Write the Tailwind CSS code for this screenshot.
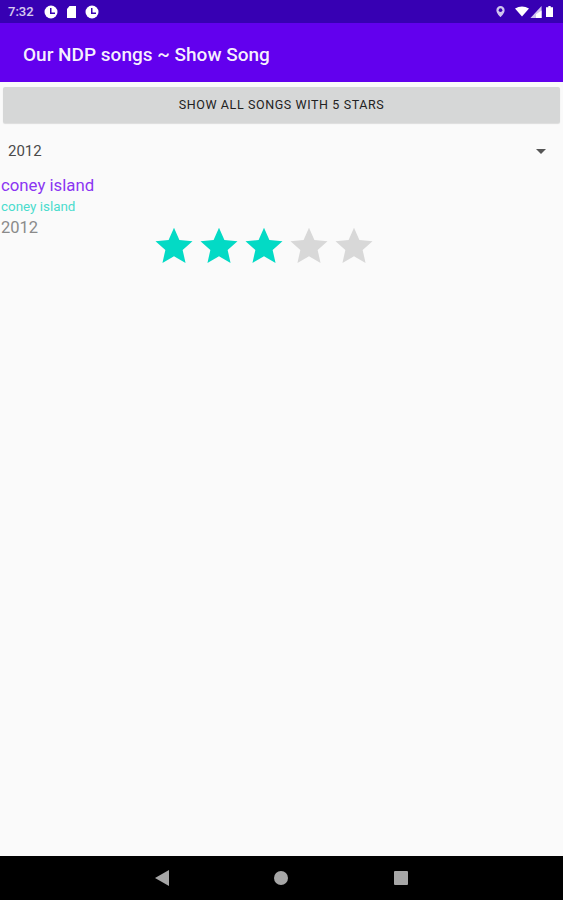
<!DOCTYPE html>
<html lang="en">
<head>
  <meta charset="UTF-8" />
  <meta name="viewport" content="width=device-width, initial-scale=1" />
  <title>Show Song</title>
  <script src="https://cdn.jsdelivr.net/npm/@tailwindcss/browser@4"></script>
</head>
<body class="bg-[#fafafa] font-['Roboto',sans-serif]">
  <div class="flex h-[900px] w-[563px] flex-col overflow-hidden">

    <!-- Status bar -->
    <div class="flex h-[23px] items-center justify-between bg-[#3700b3] pl-[8px] pr-[10px] text-white">
      <div class="flex items-center">
        <span class="w-[27px] text-[13px] font-medium leading-none text-white/80">7:32</span>
        <svg class="ml-[9px] h-[14px] w-[14px]" viewBox="0 0 14 14"><circle cx="7" cy="7" r="6.500" fill="#fff"/><path d="M6 3h1.500v4.500H11V9H6z" fill="#3700b3"/></svg>
        <svg class="ml-[9px] h-[12px] w-[9px]" viewBox="0 0 9 12"><path d="M2.500 0H9v12H0V3z" fill="#fff"/></svg>
        <svg class="ml-[9px] h-[14px] w-[14px]" viewBox="0 0 14 14"><circle cx="7" cy="7" r="6.500" fill="#fff"/><path d="M6 3h1.500v4.500H11V9H6z" fill="#3700b3"/></svg>
      </div>
      <div class="flex items-center">
        <svg class="h-[13px] w-[11px]" viewBox="0 0 12 14"><path d="M6 1a4.500 4.500 0 0 0-4.500 4.500C1.500 9 6 13 6 13s4.500-4 4.500-7.500A4.500 4.500 0 0 0 6 1z" fill="#cfc4ee"/><circle cx="6" cy="5.500" r="2" fill="#3700b3"/></svg>
        <svg class="ml-[9px] h-[11px] w-[14px]" viewBox="0 0 17 12"><path d="M0 2.500Q8.500-2.500 17 2.500L8.500 12z" fill="#fff"/></svg>
        <svg class="ml-[1px] h-[12px] w-[12px]" viewBox="0 0 12 13"><path d="M12 0v13H0z" fill="#cfc4ee"/><path d="M12 5v8H6V9z" fill="#fff"/></svg>
        <svg class="ml-[4px] h-[13px] w-[7px]" viewBox="0 0 9 14"><path d="M3 0h3v1.500h3V14H0V1.500h3z" fill="#fff"/></svg>
      </div>
    </div>

    <!-- App bar -->
    <div class="flex h-[59px] items-center bg-[#6200ee] pl-[23px] pt-[3px]">
      <h1 class="text-[19px] font-medium leading-none text-white/95">Our NDP songs ~ Show Song</h1>
    </div>

    <!-- Content -->
    <div class="flex-1 pt-[5px]">
      <button class="mx-[3px] flex h-[36px] w-[557px] items-center justify-center rounded-[2px] bg-[#d6d7d7] text-[12.500px] tracking-[0.6px] text-[#222] shadow-[0_1px_1px_rgba(0,0,0,0.12)]">
        SHOW ALL SONGS WITH 5 STARS
      </button>

      <!-- Spinner -->
      <div class="mt-[16px] flex h-[24px] items-center justify-between pl-[8px] pr-[17px]">
        <span class="text-[15px] text-[#4a4a4a]">2012</span>
        <svg class="h-[5px] w-[10px]" viewBox="0 0 10 5"><path d="M0 0h10L5 5z" fill="#555"/></svg>
      </div>

      <!-- Song row -->
      <div class="mt-[11px] flex">
        <div class="w-[155px] pl-[1px]">
          <p class="text-[16.800px] leading-[22px] text-[#8a35f2]">coney island</p>
          <p class="mt-[2px] text-[13.400px] leading-[18px] text-[#4adccd]">coney island</p>
          <p class="mt-[1px] text-[16.500px] leading-[22px] text-[#8a8a8a]">2012</p>
        </div>
        <div class="mt-[53px] flex h-[37px] gap-[7px]">
          <svg class="h-[37px] w-[38px]" viewBox="0 0 24 24"><path d="M12 .5l3.500 8 8.500.8-6.400 5.600 1.900 8.400L12 18.900l-7.500 4.400 1.900-8.400L0 9.300l8.500-.8z" fill="#03dac5"/></svg>
          <svg class="h-[37px] w-[38px]" viewBox="0 0 24 24"><path d="M12 .5l3.500 8 8.500.8-6.400 5.600 1.900 8.400L12 18.900l-7.500 4.400 1.900-8.400L0 9.300l8.500-.8z" fill="#03dac5"/></svg>
          <svg class="h-[37px] w-[38px]" viewBox="0 0 24 24"><path d="M12 .5l3.500 8 8.500.8-6.400 5.600 1.900 8.400L12 18.900l-7.500 4.400 1.900-8.400L0 9.300l8.500-.8z" fill="#03dac5"/></svg>
          <svg class="h-[37px] w-[38px]" viewBox="0 0 24 24"><path d="M12 .5l3.500 8 8.500.8-6.400 5.600 1.900 8.400L12 18.900l-7.500 4.400 1.900-8.400L0 9.300l8.500-.8z" fill="#d8d8d8"/></svg>
          <svg class="h-[37px] w-[38px]" viewBox="0 0 24 24"><path d="M12 .5l3.500 8 8.500.8-6.400 5.600 1.900 8.400L12 18.900l-7.500 4.400 1.900-8.400L0 9.300l8.500-.8z" fill="#d8d8d8"/></svg>
        </div>
      </div>
    </div>

    <!-- Nav bar -->
    <div class="flex h-[44px] items-center bg-black pl-[155px]">
      <svg class="h-[16px] w-[14px]" viewBox="0 0 14 16"><path d="M14 0v16L0 8z" fill="#a6a6a6"/></svg>
      <div class="ml-[105px] h-[14px] w-[14px] rounded-full bg-[#a6a6a6]"></div>
      <div class="ml-[106px] h-[14px] w-[14px] rounded-[1px] bg-[#a6a6a6]"></div>
    </div>
  </div>
</body>
</html>
